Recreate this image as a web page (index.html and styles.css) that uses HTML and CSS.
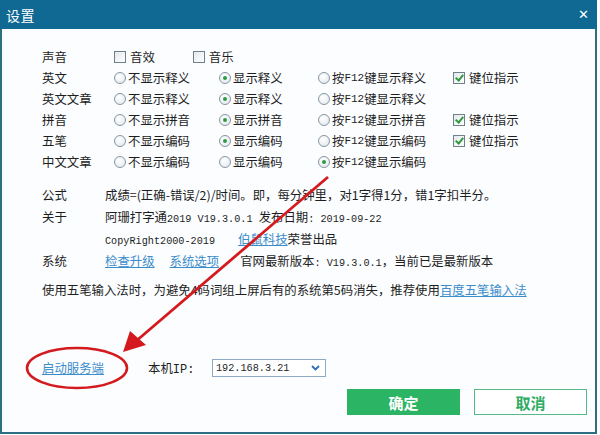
FILE: index.html
```html
<!DOCTYPE html>
<html lang="zh-CN">
<head>
    <meta charset="UTF-8">
    <title>设置</title>
    <link rel="stylesheet" href="styles.css">
</head>
<body>
    <div class="dialog">
        <div class="titlebar">
            <span class="title">设置</span>
            <span class="close">&#x2715;</span>
        </div>

        <div class="content">
            <div class="options">
                <span class="label">声音</span>
                <div class="sound">
                    <span class="opt"><i class="box"></i>音效</span>
                    <span class="opt"><i class="box"></i>音乐</span>
                </div>

                <span class="label">英文</span>
                <span class="opt"><i class="radio"></i>不显示释义</span>
                <span class="opt"><i class="radio on"></i>显示释义</span>
                <span class="opt"><i class="radio"></i>按<span class="en">F12</span>键显示释义</span>
                <span class="opt"><i class="box on"></i>键位指示</span>

                <span class="label">英文文章</span>
                <span class="opt"><i class="radio"></i>不显示释义</span>
                <span class="opt"><i class="radio on"></i>显示释义</span>
                <span class="opt"><i class="radio"></i>按<span class="en">F12</span>键显示释义</span>
                <span></span>

                <span class="label">拼音</span>
                <span class="opt"><i class="radio"></i>不显示拼音</span>
                <span class="opt"><i class="radio on"></i>显示拼音</span>
                <span class="opt"><i class="radio"></i>按<span class="en">F12</span>键显示拼音</span>
                <span class="opt"><i class="box on"></i>键位指示</span>

                <span class="label">五笔</span>
                <span class="opt"><i class="radio"></i>不显示编码</span>
                <span class="opt"><i class="radio on"></i>显示编码</span>
                <span class="opt"><i class="radio"></i>按<span class="en">F12</span>键显示编码</span>
                <span class="opt"><i class="box on"></i>键位指示</span>

                <span class="label">中文文章</span>
                <span class="opt"><i class="radio"></i>不显示编码</span>
                <span class="opt"><i class="radio"></i>显示编码</span>
                <span class="opt"><i class="radio on"></i>按<span class="en">F12</span>键显示编码</span>
                <span></span>
            </div>

            <div class="info">
                <span class="label">公式</span>
                <span>成绩=(正确-错误/2)/时间。即，每分钟里，对1字得1分，错1字扣半分。</span>

                <span class="label">关于</span>
                <span>阿珊打字通<span class="en">2019 V19.3.0.1 </span>发布日期<span class="en">: 2019-09-22</span></span>

                <span></span>
                <span><span class="en copy">CopyRight2000-2019</span><a href="#">伯鼠科技</a>荣誉出品</span>

                <span class="label">系统</span>
                <span class="sys">
                    <a href="#">检查升级</a>
                    <a href="#">系统选项</a>
                    <span class="ver">官网最新版本<span class="en">: V19.3.0.1</span>，当前已是最新版本</span>
                </span>
            </div>

            <p class="tip">使用五笔输入法时，为避免4码词组上屏后有的系统第5码消失，推荐使用<a href="#">百度五笔输入法</a></p>

            <div class="server">
                <a href="#" class="start">启动服务端</a>
                <span class="ip-label">本机<span class="ip-en">IP:</span></span>
                <div class="ip-select">
                    <span class="en">192.168.3.21</span>
                    <svg width="9" height="6" viewBox="0 0 9 6"><path d="M1 1 L4.5 4.5 L8 1" fill="none" stroke="#2a6fb8" stroke-width="1.8"/></svg>
                </div>
            </div>

            <div class="actions">
                <button class="ok">确定</button>
                <button class="cancel">取消</button>
            </div>
        </div>

        <svg class="mark" width="600" height="435" viewBox="0 0 600 435">
            <ellipse cx="77" cy="368" rx="50" ry="20" fill="none" stroke="#d41a1f" stroke-width="2.6"/>
            <line x1="328" y1="177" x2="135" y2="342" stroke="#d41a1f" stroke-width="2.8"/>
            <path d="M123 352 L130 331 L146 345 Z" fill="#d41a1f"/>
        </svg>
    </div>
</body>
</html>
```

FILE: styles.css
```css
body {
    margin: 0;
    background: #ffffff;
    font-family: "Noto Sans CJK SC", "Noto Sans", sans-serif;
    font-size: 12.4px;
    color: #1e1e1e;
}

.dialog {
    position: relative;
    width: 597px;
    height: 434px;
    box-sizing: border-box;
    border: 2px solid #2f6f84;
    border-top: none;
    background: #fbfdff;
    display: flex;
    flex-direction: column;
}

.titlebar {
    height: 29px;
    background: #0f6993;
    color: #fff;
    display: flex;
    align-items: center;
    justify-content: space-between;
    padding: 0 8px 0 6px;
    margin: 0 -2px;
}

.title {
    font-size: 14px;
    letter-spacing: 0.5px;
}

.close {
    font-size: 13px;
    font-family: "DejaVu Sans", sans-serif;
}

.content {
    padding: 17px 8px 0 40px;
    display: flex;
    flex-direction: column;
}

.en {
    font-family: "Liberation Mono", monospace;
    font-size: 10.2px;
}

/* option table */
.options {
    display: grid;
    grid-template-columns: 72px 105px 99px 135px auto;
    grid-auto-rows: 21px;
    align-items: center;
}

.sound {
    grid-column: 2 / 6;
    display: flex;
    gap: 38px;
}

.opt {
    display: flex;
    align-items: center;
    white-space: nowrap;
}

.opt .en {
    font-size: 11px;
}

.radio {
    width: 10px;
    height: 10px;
    border: 1px solid #8796a2;
    border-radius: 50%;
    background: radial-gradient(circle at 40% 35%, #ffffff, #dfe6ec);
    margin-right: 2px;
    position: relative;
}

.radio.on::after {
    content: "";
    position: absolute;
    left: 3px;
    top: 3px;
    width: 4px;
    height: 4px;
    border-radius: 50%;
    background: #2f9a3f;
}

.box {
    width: 10px;
    height: 10px;
    border: 1px solid #6f7f8b;
    background: linear-gradient(135deg, #e4e8ec, #ffffff);
    margin-right: 4px;
    position: relative;
}

.box.on::after {
    content: "";
    position: absolute;
    left: 3px;
    top: 0px;
    width: 3px;
    height: 6px;
    border: solid #2f9a3f;
    border-width: 0 2px 2px 0;
    transform: rotate(40deg);
}

/* info rows */
.info {
    display: grid;
    grid-template-columns: 63px auto;
    grid-auto-rows: 22px;
    align-items: center;
    margin-top: 12px;
}

a {
    color: #3b8ccb;
    text-decoration: underline;
}

.copy {
    margin-right: 23px;
}

.sys {
    display: flex;
    align-items: center;
}

.sys a {
    margin-right: 15px;
}

.sys .ver {
    margin-left: 6px;
}

.tip {
    margin: 7px 0 0;
    line-height: 22px;
}

/* server row */
.server {
    display: flex;
    align-items: center;
    height: 22px;
    margin-top: 56px;
}

.start {
    width: 106px;
}

.ip-label {
    width: 64px;
}

.ip-en {
    font-family: "Liberation Mono", monospace;
    font-size: 12px;
}

.ip-select {
    width: 104px;
    height: 16px;
    border: 1px solid #8fa9c4;
    background: #fff;
    display: flex;
    align-items: center;
    justify-content: space-between;
    padding: 0 5px 0 3px;
    box-sizing: content-box;
}

.actions {
    display: flex;
    justify-content: flex-end;
    gap: 14px;
    margin-top: 10px;
}

.actions button {
    width: 113px;
    height: 26px;
    font-family: "Noto Sans CJK SC", sans-serif;
    font-size: 15px;
    font-weight: bold;
    border-radius: 0;
    cursor: pointer;
}

.ok {
    background: #2ab463;
    border: 1px solid #2ab463;
    color: #fff;
}

.cancel {
    background: #fff;
    border: 1px solid #55b985;
    color: #2fab63;
}

.mark {
    position: absolute;
    left: -2px;
    top: 0;
    pointer-events: none;
}
```
